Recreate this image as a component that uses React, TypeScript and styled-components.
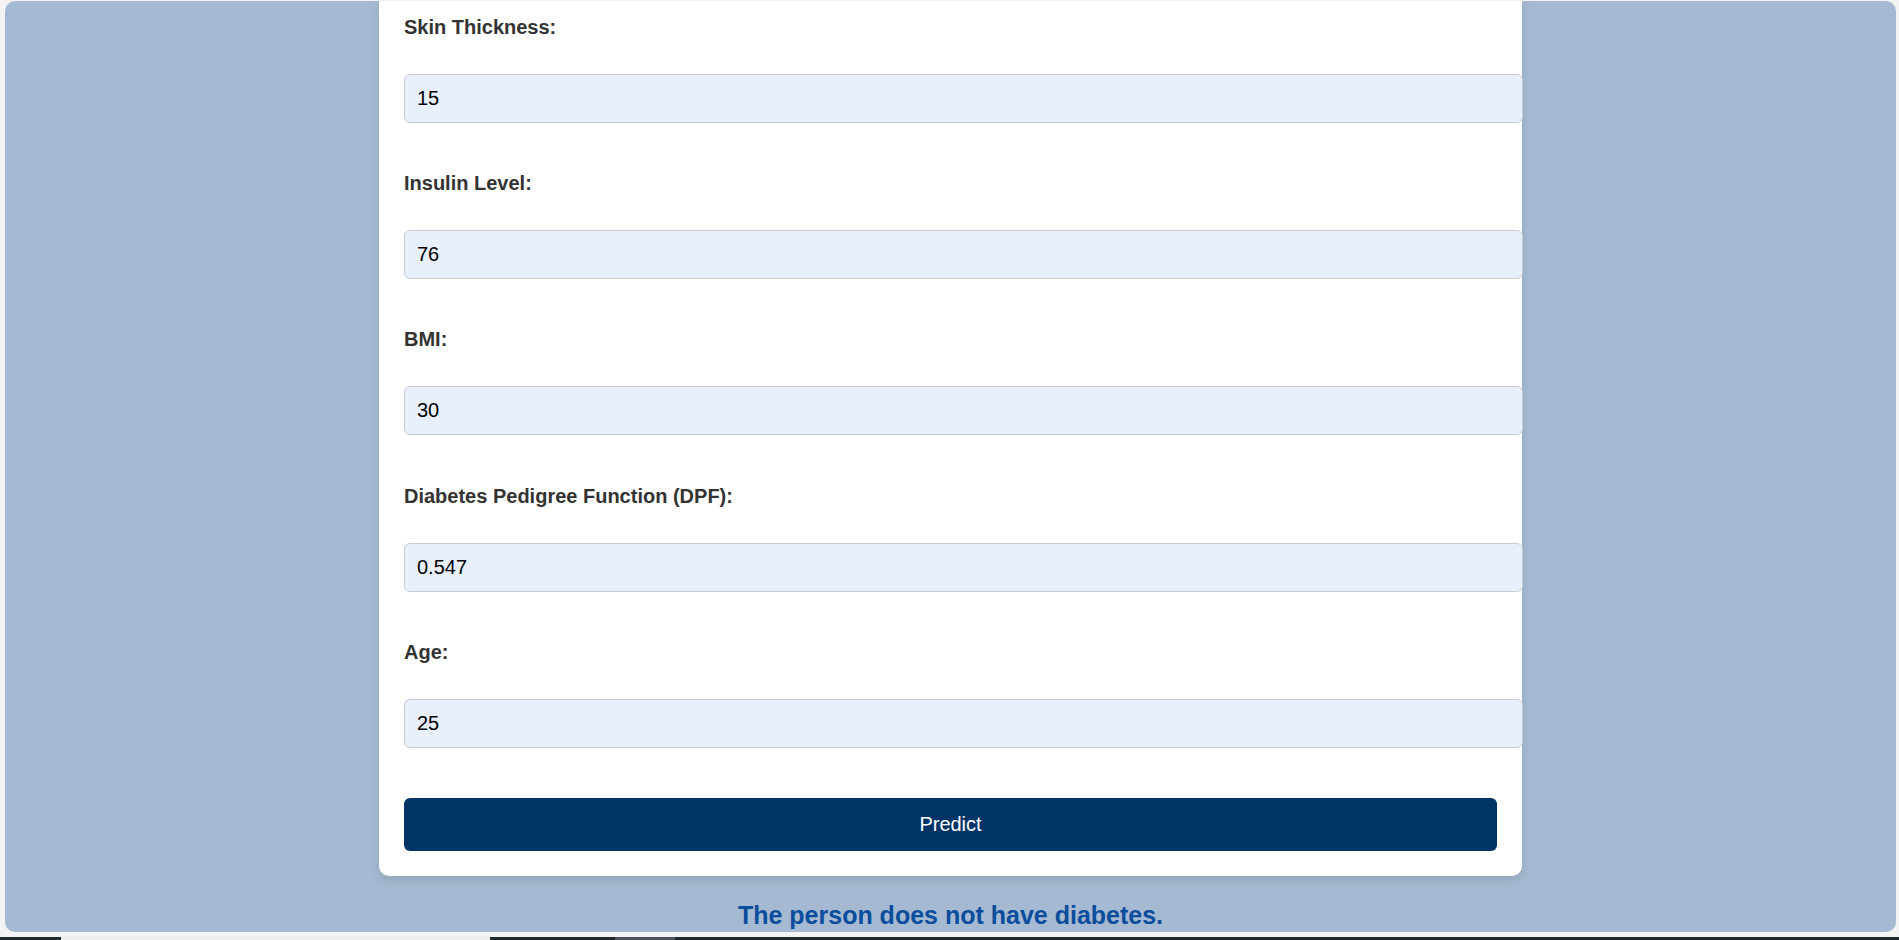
import styled, { createGlobalStyle } from "styled-components";

const GlobalStyle = createGlobalStyle`
    html, body {
        margin: 0;
        padding: 0;
        height: 100%;
        overflow: hidden;
        background: #f3f3f3;
        font-family: "Liberation Sans", Arial, sans-serif;
    }
`;

const Screen = styled.div`
    height: 940px;
    display: flex;
    flex-direction: column;
`;

const Viewport = styled.div`
    margin: 1px 3px 0 5px;
    height: 931px;
    background: #a5bad2;
    border-radius: 10px;
    overflow: hidden;
    display: flex;
    flex-direction: column;
    align-items: center;
`;

const Card = styled.div`
    box-sizing: border-box;
    width: 1143px;
    padding: 13px 25px 25px;
    background: #ffffff;
    border-radius: 0 0 10px 10px;
    box-shadow: 0 4px 10px rgba(0, 0, 0, 0.12);
`;

const Form = styled.form`
    display: flex;
    flex-direction: column;
`;

const Label = styled.label`
    display: block;
    font-size: 20px;
    line-height: 23px;
    font-weight: bold;
    color: #333333;
    margin: 2px 0 35px;
`;

const Input = styled.input`
    display: block;
    width: 100%;
    height: 47px;
    padding: 0 12px;
    border: 1px solid #c9cbcf;
    border-radius: 6px;
    background: #e8f0fe;
    font-family: "Liberation Sans", Arial, sans-serif;
    font-size: 20px;
    color: #000000;
    margin-bottom: 47.2px;
    outline: none;
`;

const Button = styled.button`
    display: block;
    width: 100%;
    height: 53px;
    margin-top: 3px;
    border: none;
    border-radius: 6px;
    background: #003366;
    color: #ffffff;
    font-family: "Liberation Sans", Arial, sans-serif;
    font-size: 20px;
    cursor: pointer;
`;

const Result = styled.h2`
    margin: 25px 0 0;
    font-size: 25px;
    font-weight: bold;
    color: #0a4d9c;
`;

const Taskbar = styled.div`
    margin-top: auto;
    height: 3px;
    display: flex;
    background: #1d2a30;
`;

const TaskSlot = styled.div<{ $w: number; $bg: string }>`
    width: ${(p) => p.$w}px;
    background: ${(p) => p.$bg};
`;

const fields = [
    { name: "skin", label: "Skin Thickness:", value: "15" },
    { name: "insulin", label: "Insulin Level:", value: "76" },
    { name: "bmi", label: "BMI:", value: "30" },
    { name: "dpf", label: "Diabetes Pedigree Function (DPF):", value: "0.547" },
    { name: "age", label: "Age:", value: "25" },
];

export default function App() {
    return (
        <>
            <GlobalStyle />
            <Screen>
                <Viewport>
                    <Card>
                        <Form onSubmit={(e) => e.preventDefault()}>
                            {fields.map((f) => (
                                <div key={f.name}>
                                    <Label htmlFor={f.name}>{f.label}</Label>
                                    <Input id={f.name} name={f.name} type="text" defaultValue={f.value} />
                                </div>
                            ))}
                            <Button type="submit">Predict</Button>
                        </Form>
                    </Card>
                    <Result>The person does not have diabetes.</Result>
                </Viewport>
                <Taskbar>
                    <TaskSlot $w={61} $bg="#1d2a30" />
                    <TaskSlot $w={429} $bg="#eeeeee" />
                    <TaskSlot $w={125} $bg="#1d2a30" />
                    <TaskSlot $w={60} $bg="#4b5559" />
                </Taskbar>
            </Screen>
        </>
    );
}
